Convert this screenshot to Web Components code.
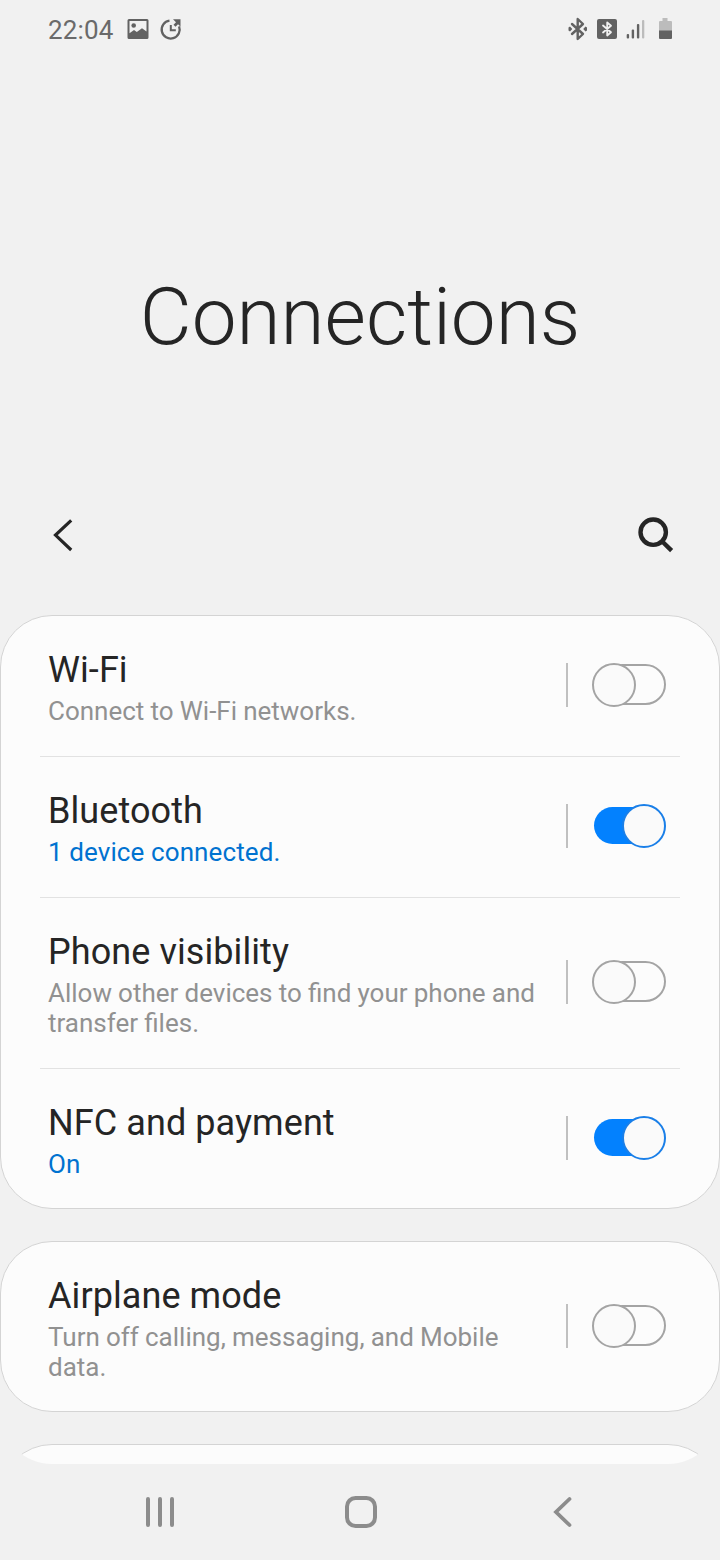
<!DOCTYPE html>
<html lang="en">
<head>
<meta charset="utf-8">
<title>Connections</title>
<style>
html,body{margin:0;background:#f1f1f1}
body{font-family:Roboto,"Noto Sans",sans-serif;color:#252525}
</style>
</head>
<body>
<settings-screen></settings-screen>
<script>
const define = (name, html) => customElements.define(name, class extends HTMLElement {
  connectedCallback() {
    if (this.shadowRoot) return;
    const t = document.createElement('template');
    t.innerHTML = html;
    this.attachShadow({mode: 'open'}).append(t.content.cloneNode(true));
  }
});

define('status-bar', `
<style>
:host{display:flex;height:60px;box-sizing:border-box;padding:0 47px 0 48px;align-items:center;color:#6a6a6a}
svg{display:block;flex:none;margin-bottom:2px}
.time{font-size:26px;line-height:30px;letter-spacing:.15px}
.left,.right{display:flex;align-items:center}
.right{margin-left:auto}
</style>
<div class="left"><span class="time">22:04</span>
<svg style="margin-left:13.500px" width="22" height="20" viewBox="0 0 22 20"><path fill="#626262" fill-rule="evenodd" d="M2 0h18a1.500 1.500 0 0 1 1.500 1.500v17a1.500 1.500 0 0 1-1.500 1.500H2a1.500 1.500 0 0 1-1.500-1.500v-17A1.500 1.500 0 0 1 2 0ZM2.500 2v12.200L7 11l2.800 2 5.200-3.800 4.500 3.300V2Z"/><circle cx="6.700" cy="6.500" r="2.300" fill="#626262"/></svg>
<svg style="margin-left:10px" width="24" height="24" viewBox="0 0 24 24" fill="none" stroke="#626262"><path stroke-width="2.300" d="M10.500 3.600A9 9 0 1 0 20.100 9.300"/><path stroke-width="2" d="M11.800 8v5.300h5"/><path d="M14 2.300h7.500v7.200L19 7.300l-2.500 2.400-2-2L17 5.200Z" fill="#626262" stroke="none"/></svg></div>
<div class="right">
<svg width="20" height="24" viewBox="0 0 20 24" fill="none" stroke="#626262"><path stroke-width="2.400" stroke-linejoin="round" stroke-linecap="round" d="M4 7 15 17l-5.300 5V2L15 7 4 17"/><path fill="#626262" stroke="none" d="m2 9.500 2.300 2.500L2 14.500l-1.500-1v-3ZM17.500 9.500l-2.300 2.500 2.300 2.500 1.500-1v-3Z"/></svg>
<svg style="margin-left:9px" width="20" height="20" viewBox="0 0 20 20"><rect width="20" height="20" rx="2" fill="#626262"/><path fill="none" stroke="#f1f1f1" stroke-width="1.800" stroke-linejoin="round" stroke-linecap="round" d="m6 6.500 8 6.700-3.800 3.300v-13L14 6.800 6 13.500"/></svg>
<svg style="margin-left:9px" width="20" height="20" viewBox="0 0 20 20" fill="#626262"><rect x=".7" y="15" width="2.400" height="4.500" rx="1"/><rect x="5.700" y="10.500" width="2.400" height="9" rx="1"/><rect x="10.900" y="5" width="2.400" height="14.500" rx="1"/><rect x="16" y="1" width="2.300" height="18.500" rx="1" fill="#bcbcbc"/></svg>
<svg style="margin-left:12px" width="15" height="22" viewBox="0 0 15 22"><path fill="#bcbcbc" d="M4.500 0h5v3H13a1 1 0 0 1 1 1v9H1V4a1 1 0 0 1 1-1h2.500Z"/><path fill="#626262" d="M1 12.500h13V20a1 1 0 0 1-1 1H2a1 1 0 0 1-1-1Z"/></svg>
</div>`);

define('page-title', `
<style>
:host{display:flex;height:420px;align-items:center;justify-content:center}
h1{margin:0 0 -93px;font-size:80px;line-height:94px;font-weight:300}
</style><h1><slot></slot></h1>`);

define('app-bar', `
<style>
:host{display:flex;height:110px;padding:0 45px 0 48px;align-items:center;justify-content:space-between}
svg{display:block}
</style>
<svg width="30" height="40" viewBox="0 0 30 40" fill="none" stroke="#252525" stroke-width="3.200"><path d="M23.200 5.300 7.500 20.100 23.200 35"/></svg>
<svg width="40" height="40" viewBox="0 0 40 40" fill="none" stroke="#252525"><circle cx="18.200" cy="17.200" r="12.700" stroke-width="4.400"/><path stroke-width="4.400" d="m27 26.200 9.600 9.400"/></svg>`);

define('settings-card', `
<style>
:host{display:block;box-sizing:border-box;background:#fcfcfc;border:1px solid #d4d4d4;border-radius:52px}
</style><slot></slot>`);

customElements.define('toggle-switch', class extends HTMLElement {
  connectedCallback() {
    const on = this.hasAttribute('on');
    this.attachShadow({mode: 'open'}).innerHTML = `
<style>:host{display:block;width:76px;height:44px}svg{display:block}</style>
<svg width="76" height="44" viewBox="0 0 76 44">${on
  ? '<rect x="3" y="3" width="62" height="37" rx="18.500" fill="#0381fe"/><circle cx="53" cy="22" r="21" fill="#fafafa" stroke="#1a7fe8" stroke-width="2"/>'
  : '<rect x="12" y="2" width="62" height="39" rx="19.500" fill="#fcfcfc" stroke="#a4a4a4" stroke-width="2"/><circle cx="23" cy="22" r="21" fill="#fafafa" stroke="#a4a4a4" stroke-width="2"/>'}</svg>`;
  }
});

customElements.define('setting-row', class extends HTMLElement {
  connectedCallback() {
    const on = this.hasAttribute('on');
    this.attachShadow({mode: 'open'}).innerHTML = `
<style>
:host{display:block}
:host(:not(:last-child))::after{content:"";display:block;height:1px;margin:1px 39px 0;background:#e2e2e2}
.row{display:flex;align-items:center;padding:0 52px 0 47px}
.text{flex:1;padding:33px 0 29px}
.title{font-size:36px;line-height:42px;letter-spacing:.08px}
.sub{font-size:26px;line-height:30px;margin-top:5px;${on ? 'color:#0072d0;letter-spacing:.1px' : 'color:#919191;word-spacing:-.3px'}}
.bar{width:2px;height:44px;background:#c0c0c0;margin:0 23px 1px 24px}
toggle-switch{margin-bottom:1px}
</style>
<div class="row"><div class="text"><div class="title"><slot name="title"></slot></div><div class="sub"><slot></slot></div></div><div class="bar"></div><toggle-switch ${on ? 'on' : ''}></toggle-switch></div>`;
  }
});

define('nav-bar', `
<style>
:host{display:grid;grid-template-columns:repeat(3,201px);justify-content:center;height:96px;place-items:center}
svg{display:block}
</style>
<svg width="40" height="40" viewBox="0 0 40 40" fill="none" stroke="#8c8c8c" stroke-width="4" stroke-linecap="round"><path d="M9 7v26M21 7v26M33 7v26"/></svg>
<svg width="40" height="40" viewBox="0 0 40 40" fill="none" stroke="#8c8c8c" stroke-width="4"><rect x="7" y="6" width="28" height="28" rx="8.500"/></svg>
<svg width="40" height="40" viewBox="0 0 40 40" fill="none" stroke="#8c8c8c" stroke-width="3.800" stroke-linecap="round"><path d="M28.500 7 15 20l13.500 13"/></svg>`);

define('settings-screen', `
<style>
:host{display:flex;flex-direction:column;width:720px;height:1560px;overflow:hidden;background:#f1f1f1}
main{height:849px;display:flex;flex-direction:column;gap:32px;overflow:hidden;margin-top:25px;border-radius:0 0 52px 52px}
settings-card{flex:none}
.next{height:120px}
nav-bar{flex:none}
</style>
<status-bar></status-bar>
<page-title>Connections</page-title>
<app-bar></app-bar>
<main>
<settings-card>
<setting-row><span slot="title">Wi-Fi</span>Connect to Wi-Fi networks.</setting-row>
<setting-row on><span slot="title">Bluetooth</span>1 device connected.</setting-row>
<setting-row><span slot="title">Phone visibility</span>Allow other devices to find your phone and transfer files.</setting-row>
<setting-row on><span slot="title">NFC and payment</span>On</setting-row>
</settings-card>
<settings-card>
<setting-row><span slot="title">Airplane mode</span>Turn off calling, messaging, and Mobile data.</setting-row>
</settings-card>
<settings-card class="next"></settings-card>
</main>
<nav-bar></nav-bar>`);
</script>
</body>
</html>
